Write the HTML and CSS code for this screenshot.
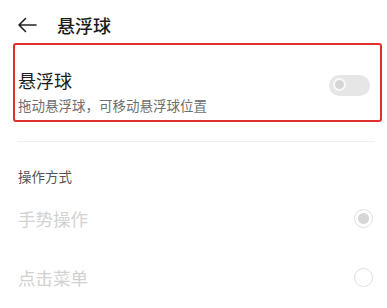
FILE: index.html
```html
<!DOCTYPE html>
<html lang="zh">
<head>
<meta charset="utf-8">
<link rel="stylesheet" href="styles.css">
</head>
<body>
<div class="page">
  <header class="topbar">
    <svg class="back" width="20" height="16" viewBox="0 0 20 16"><path d="M19 8H2M8.5 1.5L2 8l6.5 6.5" fill="none" stroke="#222" stroke-width="1.6" stroke-linecap="round" stroke-linejoin="round"/></svg>
    <span class="title">悬浮球</span>
  </header>
  <section class="card">
    <div class="card-text">
      <div class="card-title">悬浮球</div>
      <div class="card-sub">拖动悬浮球，可移动悬浮球位置</div>
    </div>
    <div class="toggle"><span class="knob"></span></div>
  </section>
  <div class="divider"></div>
  <div class="section-label">操作方式</div>
  <div class="options">
    <div class="option">
      <span class="opt-text">手势操作</span>
      <span class="radio checked"></span>
    </div>
    <div class="option">
      <span class="opt-text">点击菜单</span>
      <span class="radio"></span>
    </div>
  </div>
</div>
</body>
</html>
```
FILE: styles.css
```css
html, body { margin: 0; padding: 0; background: #fff; }
body { font-family: "Noto Sans CJK SC", "Noto Sans", sans-serif; color: #222; }
.page { width: 387px; height: 308px; overflow: hidden; }
.topbar { height: 43px; display: flex; align-items: center; padding-left: 17px; box-sizing: border-box; padding-top: 6px; }
.back { display: block; }
.title { font-size: 18px; margin-left: 20px; font-weight: 500; color: #1a1a1a; line-height: 1; }
.card { margin: 0 5px 0 13px; height: 79px; box-sizing: border-box; border: 2.5px solid #e0302a; border-radius: 3px; display: flex; align-items: center; justify-content: space-between; padding: 22px 10px 4px 3px; }
.card-title { font-size: 18px; line-height: 22px; color: #1c1c1c; }
.card-sub { font-size: 13.5px; line-height: 18px; color: #6f6f6f; margin-top: 5px; }
.toggle { width: 41px; height: 21px; border-radius: 11px; background: #e6e6e6; position: relative; margin-top: -12px; }
.knob { position: absolute; left: 4px; top: 3px; width: 9px; height: 9px; border-radius: 50%; background: #d6d6d6; border: 2.5px solid #f8f8f8; }
.divider { height: 1px; background: #efefef; margin: 19px 12px 0 17px; }
.section-label { font-size: 13.5px; color: #555; line-height: 18px; margin: 25px 0 0 18px; }
.options { padding-top: 4px; }
.option { display: flex; align-items: center; justify-content: space-between; height: 59px; padding: 0 14px 0 18px; }
.opt-text { font-size: 17.5px; color: #d2d2d2; }
.radio { width: 17px; height: 17px; border-radius: 50%; border: 1.5px solid #e0e0e0; box-sizing: content-box; position: relative; }
.radio.checked::after { content: ""; position: absolute; left: 3px; top: 3px; width: 11px; height: 11px; border-radius: 50%; background: #d6d6d6; }
```
